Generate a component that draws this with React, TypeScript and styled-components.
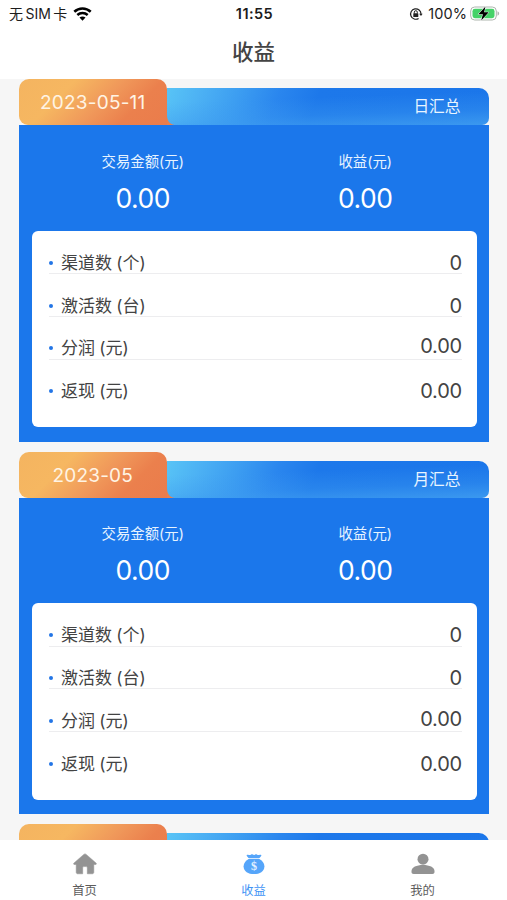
import React from "react";
import styled, { createGlobalStyle } from "styled-components";

const Global = createGlobalStyle`
  * { box-sizing: border-box; }
  body { margin: 0; background: #f6f6f6; }
`;

const Screen = styled.div`
  width: 507px;
  height: 900px;
  display: flex;
  flex-direction: column;
  overflow: hidden;
  background: #f6f6f6;
  color: #434343;
  font-family: Inter, "Noto Sans CJK SC", sans-serif;
  white-space: nowrap;
`;

const StatusBar = styled.div`
  flex: none;
  height: 28px;
  display: grid;
  grid-template-columns: 1fr auto 1fr;
  align-items: center;
  padding: 0 7px 0 9px;
  background: #fff;
  color: #1c1c1c;
  font-size: 14px;
  line-height: 28px;
`;

const StatusGroup = styled.div<{ $end?: boolean }>`
  display: flex;
  align-items: center;
  justify-content: ${(p) => (p.$end ? "flex-end" : "flex-start")};
`;

const Carrier = styled.span`
  margin-right: 6px;
  word-spacing: -1.5px;
`;

const Clock = styled.span`
  font-weight: 600;
  font-size: 14.5px;
  letter-spacing: 0.45px;
`;

const Percent = styled.span`
  margin: 0 3px 0 5px;
  font-size: 14.5px;
  letter-spacing: 0.1px;
`;

const Header = styled.header`
  flex: none;
  height: 51px;
  display: flex;
  justify-content: center;
  background: #fff;
  font-size: 21.5px;
  font-weight: 500;
  line-height: 49px;
  color: #444;
`;

const List = styled.main`
  flex: 1;
  min-height: 0;
  overflow: hidden;
  display: flex;
  flex-direction: column;
  gap: 10px;
  padding: 0 18.5px 0 19px;
`;

const Card = styled.section`
  flex: none;
  height: 362.5px;
  display: flex;
  flex-direction: column;
`;

const CardHead = styled.div`
  flex: none;
  height: 46px;
  display: flex;
  align-items: flex-end;
`;

const DateTab = styled.div`
  width: 147.5px;
  height: 46px;
  border-radius: 10px 10px 0 9px;
  background: linear-gradient(135deg, #f4b460 0%, #f6b761 30%, #f0985a 55%, #eb804d 75%, #ea7c4b 100%);
  color: #fff4e4;
  font-size: 19px;
  line-height: 48px;
  letter-spacing: 0.2px;
  text-align: center;
`;

const SummaryBar = styled.div`
  flex: 1;
  height: 37px;
  display: flex;
  align-items: stretch;
  justify-content: space-between;
  border-radius: 0 10px 7px 0;
  background:
    linear-gradient(178deg, rgba(62, 156, 240, 0) 30%, rgba(62, 156, 240, 0.35) 68%, rgba(62, 156, 240, 0.9) 100%),
    linear-gradient(110deg, #58c4f6 0%, #4db2f4 10%, #3c9df1 22%, #2a86ee 34%, #1d78ea 46%, #1b76ea 100%);
`;

const Flare = styled.svg`
  display: block;
  flex: none;
  align-self: flex-end;
`;

const SummaryName = styled.span`
  padding-right: 28px;
  color: #e9f5ff;
  font-size: 15.7px;
  line-height: 37px;
`;

const CardBody = styled.div`
  flex: 1;
  padding: 0.5px 12px 14.5px 12.5px;
  background: #1b77eb;
  display: flex;
  flex-direction: column;
`;

const Totals = styled.div`
  flex: none;
  height: 105px;
  display: grid;
  grid-template-columns: 1fr 1fr;
  padding-top: 25px;
`;

const Total = styled.div`
  text-align: center;
  color: #fff;
`;

const TotalLabel = styled.div`
  height: 21px;
  line-height: 21px;
  font-size: 14.4px;
  color: #e6f3ff;
`;

const TotalValue = styled.div`
  height: 53px;
  line-height: 53px;
  font-size: 26.5px;
  letter-spacing: -0.5px;
`;

const Panel = styled.div`
  flex: 1;
  border-radius: 6px;
  background: #fff;
  padding: 0 14.5px 0 17.5px;
`;

const Row = styled.div`
  height: 42.8px;
  display: flex;
  align-items: center;
  border-bottom: 1px solid #ededef;
  padding-top: 21.5px;
  &:first-child { height: 43.5px; }
  &:last-child { border-bottom-color: transparent; }
`;

const Dot = styled.i`
  width: 4px;
  height: 4px;
  border-radius: 50%;
  background: #2375e6;
  margin-right: 8px;
`;

const RowLabel = styled.span`
  flex: 1;
  font-size: 17px;
  line-height: 22px;
  word-spacing: -0.5px;
`;

const RowValue = styled.span<{ $raised?: boolean }>`
  font-size: 20px;
  line-height: 22px;
  letter-spacing: -0.2px;
  padding-bottom: ${(p) => (p.$raised ? "4px" : "0")};
`;

const TabBar = styled.nav`
  flex: none;
  height: 60px;
  display: grid;
  grid-template-columns: repeat(3, 1fr);
  background: #fff;
`;

const Tab = styled.div<{ $active?: boolean }>`
  display: flex;
  flex-direction: column;
  align-items: center;
  padding-top: 13px;
  color: ${(p) => (p.$active ? "#3f94f5" : "#5c5c5c")};
  font-size: 12.3px;
  line-height: 18px;
  svg { margin-bottom: 7px; flex: none; }
`;

const WifiIcon = () => (
  <svg width="19" height="15" viewBox="0 0 19 15" fill="none">
    <path d="M1.3 4.700C6 .4 13 .4 17.700 4.700" stroke="#000" strokeWidth="2.600" />
    <path d="M4.300 8c3-2.700 7.400-2.700 10.400 0" stroke="#000" strokeWidth="2.500" />
    <path d="M6.500 10.600c1.800-1.500 4.200-1.500 6 0L9.500 13.700Z" fill="#000" />
  </svg>
);

const LockIcon = () => (
  <svg width="14" height="14" viewBox="0 0 14 14" fill="none" stroke="#222">
    <path d="M9.600 11.400A5.200 5.200 0 1 1 12 7" strokeWidth="1.200" />
    <path d="m10.200 6.700 1.800 2.200 1.600-2.200Z" fill="#222" stroke="none" />
    <rect x="4.300" y="6.200" width="5" height="3.800" rx=".6" fill="#222" stroke="none" />
    <path d="M5.300 6.500V5.200a1.500 1.500 0 0 1 3 0v1.300" strokeWidth="1" />
  </svg>
);

const BatteryIcon = () => (
  <svg width="30" height="16" viewBox="0 0 30 16">
    <rect x=".7" y="1" width="25.600" height="13" rx="4" fill="#fff" stroke="#adb5ae" />
    <rect x="2.500" y="2.800" width="22" height="9.400" rx="2.400" fill="#45d268" />
    <path d="M27.500 5.300c2.200.8 2.200 3.600 0 4.400Z" fill="#adb5ae" />
    <path d="M15.500.5 8.400 8.200h4.500l-1.700 6.300 7.500-8.200h-4.600Z" fill="#000" stroke="#fff" strokeWidth="1" paintOrder="stroke" />
  </svg>
);

const HomeIcon = () => (
  <svg width="24" height="22" viewBox="0 0 24 22">
    <path
      d="M10.800 1.400 1 10c-.8.8-.4 1.500.5 1.500h1.700v7.800c0 .9.6 1.500 1.500 1.500h5v-6c0-.8.4-1.200 1.100-1.200h2.400c.7 0 1.100.4 1.100 1.200v6h5c.9 0 1.500-.6 1.500-1.500V11.500h1.700c.9 0 1.300-.7.5-1.500l-9.800-8.600c-.8-.7-1.600-.7-2.400 0Z"
      fill="#939393"
      stroke="#939393"
      strokeWidth=".5"
    />
  </svg>
);

const BagSign = styled.text`
  font-family: "Liberation Serif", serif;
  font-size: 12px;
  font-weight: 700;
`;

const BagIcon = () => (
  <svg width="24" height="22" viewBox="0 0 24 22">
    <path d="M5.200 3.400C4 1.900 4.700 1.300 6.200 1.800c1.400.5 2 .1 3-.4 1-.5 1.700.6 2.800.6s1.800-1.100 2.800-.6c1 .5 1.600.9 3 .4 1.500-.5 2.200.1 1 1.600l-1.300 1.700H6.500Z" fill="#55a5fa" />
    <path d="M7 5.800h10c3.200 1.900 5.400 4.300 5.400 7.400 0 5.400-4.700 7.900-10.400 7.900S1.600 18.600 1.600 13.200C1.600 10.100 3.800 7.700 7 5.800Z" fill="#55a5fa" />
    <BagSign x="12" y="17.200" textAnchor="middle" fill="#e4f2ff">$</BagSign>
  </svg>
);

const UserIcon = () => (
  <svg width="24" height="22" viewBox="0 0 24 22" fill="#939393">
    <circle cx="12" cy="6.200" r="5.500" />
    <path d="M.5 18C.5 14 5.500 11.900 12 11.900s11.500 2.100 11.500 6.100v1c0 1.300-.8 2-2.100 2H2.600C1.300 21 .5 20.300.5 19Z" />
  </svg>
);

const metrics = [
  { label: "渠道数 (个)", value: "0" },
  { label: "激活数 (台)", value: "0" },
  { label: "分润 (元)", value: "0.00", raised: true },
  { label: "返现 (元)", value: "0.00" },
];

const summaries = [
  { date: "2023-05-11", name: "日汇总" },
  { date: "2023-05", name: "月汇总" },
];

const CardTop = ({ date, name }: { date?: string; name?: string }) => (
  <CardHead>
    <DateTab>{date}</DateTab>
    <SummaryBar>
      <Flare width="8" height="10" viewBox="0 0 8 10">
        <path d="M0 0C0 5 2 9 7.500 10H0Z" fill="#e9804e" />
      </Flare>
      <SummaryName>{name}</SummaryName>
    </SummaryBar>
  </CardHead>
);

const SummaryCard = ({ date, name }: { date: string; name: string }) => (
  <Card>
    <CardTop date={date} name={name} />
    <CardBody>
      <Totals>
        <Total>
          <TotalLabel>交易金额(元)</TotalLabel>
          <TotalValue>0.00</TotalValue>
        </Total>
        <Total>
          <TotalLabel>收益(元)</TotalLabel>
          <TotalValue>0.00</TotalValue>
        </Total>
      </Totals>
      <Panel>
        {metrics.map((m) => (
          <Row key={m.label}>
            <Dot />
            <RowLabel>{m.label}</RowLabel>
            <RowValue $raised={m.raised}>{m.value}</RowValue>
          </Row>
        ))}
      </Panel>
    </CardBody>
  </Card>
);

export default function App() {
  return (
    <Screen>
      <Global />
      <StatusBar>
        <StatusGroup>
          <Carrier>无 SIM 卡</Carrier>
          <WifiIcon />
        </StatusGroup>
        <Clock>11:55</Clock>
        <StatusGroup $end>
          <LockIcon />
          <Percent>100%</Percent>
          <BatteryIcon />
        </StatusGroup>
      </StatusBar>
      <Header>收益</Header>
      <List>
        {summaries.map((s) => (
          <SummaryCard key={s.date} date={s.date} name={s.name} />
        ))}
        <CardTop />
      </List>
      <TabBar>
        <Tab><HomeIcon />首页</Tab>
        <Tab $active><BagIcon />收益</Tab>
        <Tab><UserIcon />我的</Tab>
      </TabBar>
    </Screen>
  );
}
